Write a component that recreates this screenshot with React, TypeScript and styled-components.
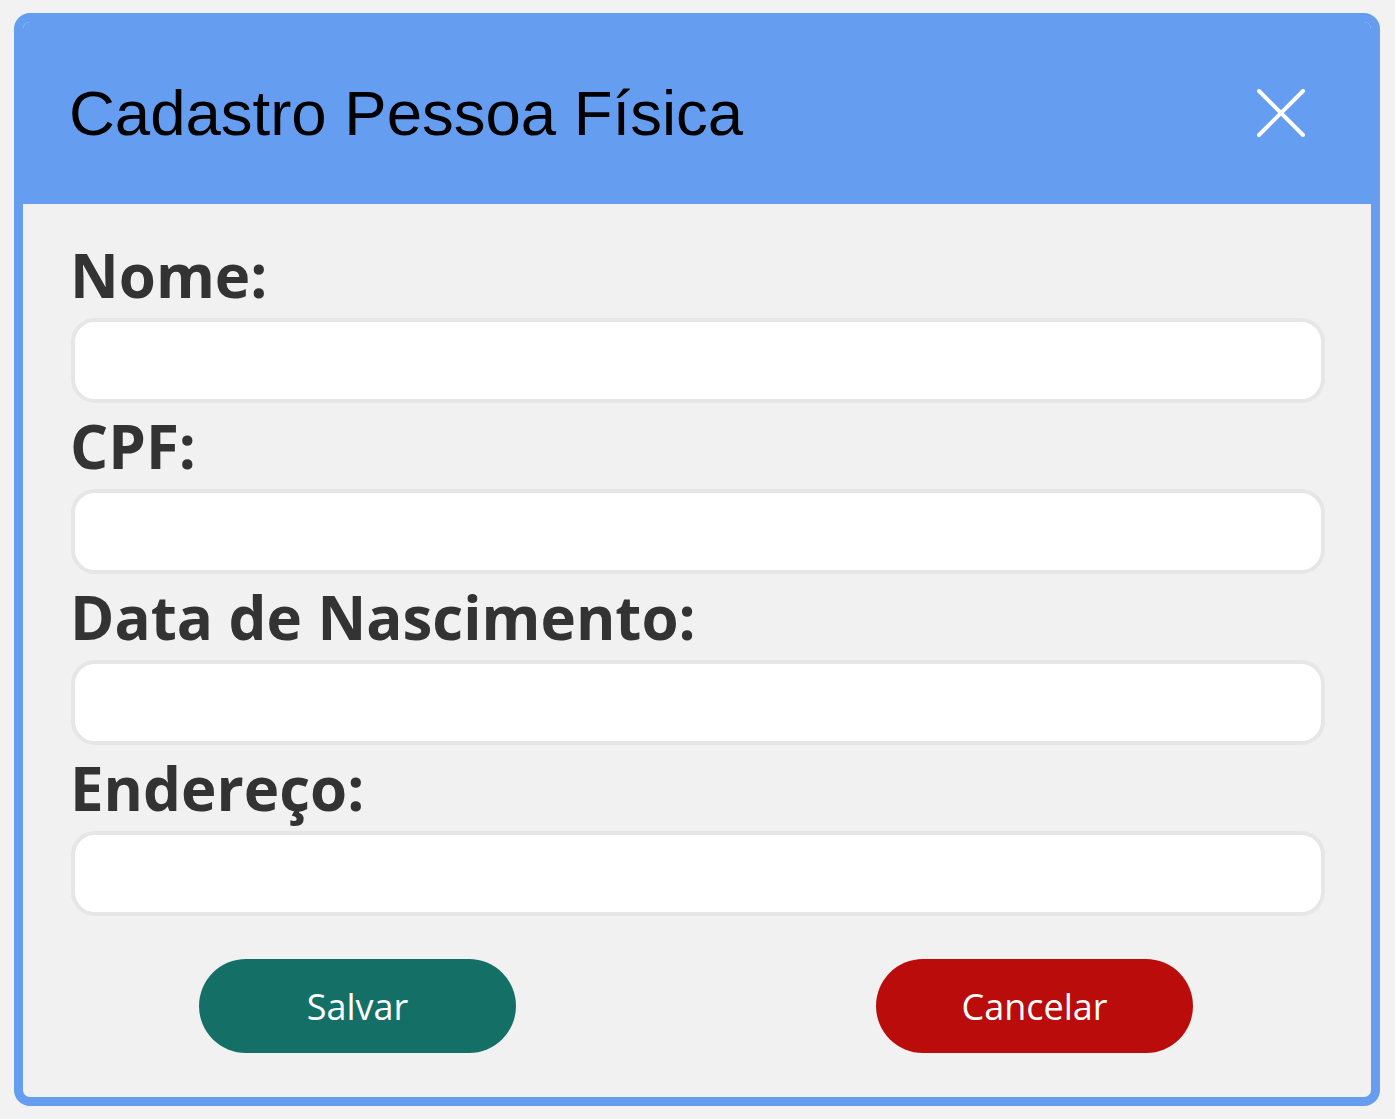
import { createGlobalStyle, styled } from "styled-components";

const GlobalStyle = createGlobalStyle`
  html, body {
    margin: 0;
    padding: 0;
    background-color: #f2f2f2;
  }
  * {
    box-sizing: border-box;
  }
`;

const Page = styled.div`
  padding: 13px 15px 13px 14px;
`;

const Card = styled.div`
  border: 9px solid #659df0;
  border-radius: 16px;
  background-color: #f1f1f1;
  overflow: hidden;
`;

const Header = styled.div`
  display: flex;
  align-items: center;
  justify-content: space-between;
  height: 182px;
  padding: 0 66px 0 46px;
  background-color: #659df0;
`;

const Title = styled.h1`
  margin: 0;
  font-family: "Liberation Sans", Arial, sans-serif;
  font-weight: 400;
  font-size: 63.5px;
  color: #000;
`;

const CloseButton = styled.button`
  display: flex;
  padding: 0;
  border: none;
  background: none;
  cursor: pointer;
`;

const Body = styled.form`
  display: flex;
  flex-direction: column;
  padding: 28px 46px 44px 48px;
`;

const Label = styled.label`
  display: block;
  margin-left: -1px;
  font-family: "Open Sans", sans-serif;
  font-weight: 700;
  font-size: 60px;
  line-height: 86px;
  color: #333;
`;

const Input = styled.input`
  display: block;
  width: 100%;
  height: 85px;
  border: 4px solid #e6e6e6;
  border-radius: 24px;
  background-color: #fff;
  padding: 0 20px;
  font-family: "Open Sans", sans-serif;
  font-size: 28px;
  &:focus {
    outline: none;
    border-color: #659df0;
  }
`;

const Actions = styled.div`
  display: flex;
  justify-content: center;
  gap: 360px;
  margin-top: 43px;
  padding-right: 4px;
`;

const Button = styled.button<{ $variant: "save" | "cancel" }>`
  width: 317px;
  height: 94px;
  border: none;
  border-radius: 47px;
  background-color: ${(p) => (p.$variant === "save" ? "#147066" : "#bb0c0c")};
  color: #fff;
  font-family: "Open Sans", sans-serif;
  font-size: 36px;
  cursor: pointer;
  &:hover {
    opacity: 0.9;
  }
`;

const fields = [
  { id: "nome", label: "Nome:" },
  { id: "cpf", label: "CPF:" },
  { id: "nascimento", label: "Data de Nascimento:" },
  { id: "endereco", label: "Endereço:" },
];

export default function App() {
  return (
    <>
      <GlobalStyle />
      <Page>
        <Card>
          <Header>
            <Title>Cadastro Pessoa Física</Title>
            <CloseButton type="button" aria-label="Fechar">
              <svg width="48" height="48" viewBox="0 0 48 48">
                <path
                  d="M2 2 L46 46 M46 2 L2 46"
                  stroke="#fff"
                  strokeWidth="4"
                  strokeLinecap="round"
                />
              </svg>
            </CloseButton>
          </Header>
          <Body onSubmit={(e) => e.preventDefault()}>
            {fields.map((f) => (
              <div key={f.id}>
                <Label htmlFor={f.id}>{f.label}</Label>
                <Input id={f.id} type="text" />
              </div>
            ))}
            <Actions>
              <Button type="submit" $variant="save">
                Salvar
              </Button>
              <Button type="button" $variant="cancel">
                Cancelar
              </Button>
            </Actions>
          </Body>
        </Card>
      </Page>
    </>
  );
}
